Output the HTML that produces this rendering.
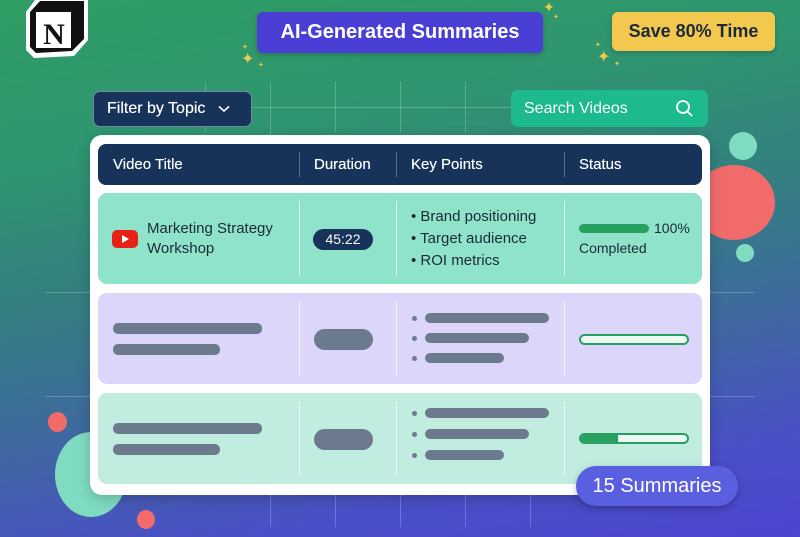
<!DOCTYPE html>
<html><head><meta charset="utf-8"><style>
*{margin:0;padding:0;box-sizing:border-box}
body{width:800px;height:537px;overflow:hidden;position:relative;font-family:"Liberation Sans","DejaVu Sans",sans-serif;
background:linear-gradient(170deg,#2f9e64 0%,#2f9570 25%,#33807f 45%,#3e6a9e 65%,#4a4fc6 85%,#4c45d0 100%)}
.a{position:absolute}
.vl{position:absolute;width:1px;background:rgba(255,255,255,.22)}
.hl{position:absolute;height:1px;background:rgba(255,255,255,.22)}
.circ{position:absolute;border-radius:50%}
.card{left:90px;top:135px;width:620px;height:360px;background:#fff;border-radius:12px;box-shadow:0 4px 14px rgba(0,0,0,.2)}
.hdr{left:98px;top:144px;width:604px;height:41px;background:#17335a;border-radius:8px;color:#fff;font-size:15px}
.hdr span{position:absolute;top:12px;text-shadow:0 0 .4px #fff}
.row{position:absolute;left:98px;width:604px;height:91px;border-radius:9px}
.sep{position:absolute;width:1px;top:8px;bottom:8px;background:rgba(255,255,255,.7)}
.bar{position:absolute;height:10px;border-radius:5px;background:#6c7a8e}
.dot{position:absolute;width:5px;height:5px;border-radius:50%;background:#6c7a8e}
.star{position:absolute;color:#f2c94c;line-height:1}
</style></head><body>
<div class="vl" style="left:205px;top:82px;height:50px"></div>
<div class="vl" style="left:270px;top:82px;height:445px"></div>
<div class="vl" style="left:335px;top:82px;height:50px"></div>
<div class="vl" style="left:400px;top:82px;height:50px"></div>
<div class="vl" style="left:465px;top:82px;height:50px"></div>
<div class="vl" style="left:335px;top:495px;height:32px"></div>
<div class="vl" style="left:400px;top:495px;height:32px"></div>
<div class="vl" style="left:465px;top:495px;height:32px"></div>
<div class="vl" style="left:530px;top:495px;height:32px"></div>
<div class="hl" style="left:252px;top:107px;width:260px"></div>
<div class="hl" style="left:45px;top:292px;width:710px"></div>
<div class="hl" style="left:45px;top:396px;width:710px"></div>

<div class="circ" style="left:693px;top:165px;width:82px;height:75px;background:#f26b6b"></div>
<div class="circ" style="left:729px;top:132px;width:28px;height:28px;background:#7fdcc0"></div>
<div class="circ" style="left:736px;top:244px;width:18px;height:18px;background:#7fdcc0"></div>
<div class="circ" style="left:48px;top:412px;width:19px;height:20px;background:#f26b6b"></div>
<div class="circ" style="left:55px;top:432px;width:72px;height:85px;background:#7fdcc0"></div>
<div class="circ" style="left:137px;top:510px;width:18px;height:19px;background:#f26b6b"></div>

<!-- notion logo -->
<svg class="a" style="left:24px;top:0px" width="66" height="58" viewBox="0 0 66 58">
<path d="M2 12 L14 -4 L64 -4 L64 40 L50 56 L10 58 L2 50 Z" fill="#fff"/>
<path d="M6 12 L16 1 L60 1 L60 39 L48 51 L12 53 L6 47 Z" fill="#111"/>
<path d="M6 12 L16 1 L54 1 L46 12 Z" fill="#fff" opacity="0"/>
<rect x="12" y="12" width="35" height="36" fill="#fff"/>
<path d="M12 12 L22 3 L57 3 L47 12 Z" fill="#111"/>
<text x="30" y="44" text-anchor="middle" font-family="Liberation Serif" font-weight="bold" font-size="30" fill="#111">N</text>
</svg>

<div class="a" style="left:257px;top:12px;width:286px;height:41px;background:#4a3fd4;border-radius:6px;color:#fff;font-size:20px;font-weight:bold;text-align:center;line-height:41px;box-shadow:0 2px 6px rgba(0,0,0,.2)">AI-Generated Summaries</div>
<div class="a" style="left:612px;top:12px;width:163px;height:39px;background:#f2c84f;border-radius:6px;color:#1c2a38;font-size:18px;font-weight:bold;text-align:center;line-height:39px;box-shadow:0 2px 6px rgba(0,0,0,.2)">Save 80% Time</div>
<div class="star" style="left:241px;top:52px;font-size:16px">✦</div>
<div class="star" style="left:242px;top:44px;font-size:7px">✦</div>
<div class="star" style="left:258px;top:62px;font-size:7px">✦</div>
<div class="star" style="left:543px;top:0px;font-size:14px">✦</div>
<div class="star" style="left:553px;top:14px;font-size:7px">✦</div>
<div class="star" style="left:597px;top:50px;font-size:16px">✦</div>
<div class="star" style="left:595px;top:42px;font-size:7px">✦</div>
<div class="star" style="left:614px;top:61px;font-size:7px">✦</div>

<div class="a" style="left:93px;top:91px;width:159px;height:36px;background:#17335a;border:1px solid #6d8aa8;border-radius:7px;color:#fff;font-size:16px;line-height:34px;padding-left:13px;text-shadow:0 0 .4px #fff">Filter by Topic <svg width="12" height="8" style="margin-left:8px;vertical-align:middle"><path d="M1 1.5 L6 6 L11 1.5" stroke="#fff" stroke-width="1.6" fill="none"/></svg></div>
<div class="a" style="left:511px;top:90px;width:197px;height:37px;background:#1dba8f;border-radius:7px;color:#fff;font-size:16px;line-height:37px;padding-left:13px">Search Videos
<svg class="a" style="left:164px;top:9px" width="20" height="20"><circle cx="8" cy="8" r="6" stroke="#fff" stroke-width="1.8" fill="none"/><path d="M12.5 12.5 L17 17" stroke="#fff" stroke-width="1.8"/></svg></div>

<div class="a card"></div>
<div class="a hdr"><span style="left:15px">Video Title</span><span style="left:216px">Duration</span><span style="left:313px">Key Points</span><span style="left:481px">Status</span>
<div class="sep" style="left:201px;background:rgba(255,255,255,.3)"></div><div class="sep" style="left:298px;background:rgba(255,255,255,.3)"></div><div class="sep" style="left:466px;background:rgba(255,255,255,.3)"></div></div>

<div class="row" style="top:193px;background:#8fe3cb">
<div class="sep" style="left:201px"></div><div class="sep" style="left:298px"></div><div class="sep" style="left:466px"></div>
<div class="a" style="left:14px;top:37px;width:26px;height:18px;background:#e62117;border-radius:5px"><div class="a" style="left:10px;top:5px;border-left:7px solid #fff;border-top:4px solid transparent;border-bottom:4px solid transparent"></div></div>
<div class="a" style="left:49px;top:26px;font-size:15px;color:#1c2a38;line-height:20px">Marketing Strategy<br>Workshop</div>
<div class="a" style="left:215px;top:36px;width:60px;height:21px;background:#17335a;border-radius:11px;color:#fff;font-size:14px;text-align:center;line-height:21px">45:22</div>
<div class="a" style="left:313px;top:13px;font-size:15px;color:#1c2a38;line-height:22px">• Brand positioning<br>• Target audience<br>• ROI metrics</div>
<div class="a" style="left:481px;top:31px;width:70px;height:9px;background:#27a060;border-radius:5px"></div>
<div class="a" style="left:556px;top:27px;font-size:14px;color:#1c2a38">100%</div>
<div class="a" style="left:481px;top:47px;font-size:14px;color:#1c2a38">Completed</div>
</div>

<div class="row" style="top:293px;background:#dbd6fa">
<div class="sep" style="left:201px"></div><div class="sep" style="left:298px"></div><div class="sep" style="left:466px"></div>
<div class="bar" style="left:15px;top:30px;width:149px;height:11px"></div>
<div class="bar" style="left:15px;top:51px;width:107px;height:11px"></div>
<div class="bar" style="left:216px;top:36px;width:59px;height:21px;border-radius:11px"></div>
<div class="dot" style="left:314px;top:23px"></div><div class="bar" style="left:327px;top:20px;width:124px"></div>
<div class="dot" style="left:314px;top:43px"></div><div class="bar" style="left:327px;top:40px;width:104px"></div>
<div class="dot" style="left:314px;top:63px"></div><div class="bar" style="left:327px;top:60px;width:79px"></div>
<div class="a" style="left:481px;top:41px;width:110px;height:11px;border:2px solid #27a060;border-radius:6px;background:#eef8f2"></div>
</div>

<div class="row" style="top:393px;background:#c0ede0">
<div class="sep" style="left:201px"></div><div class="sep" style="left:298px"></div><div class="sep" style="left:466px"></div>
<div class="bar" style="left:15px;top:30px;width:149px;height:11px"></div>
<div class="bar" style="left:15px;top:51px;width:107px;height:11px"></div>
<div class="bar" style="left:216px;top:36px;width:59px;height:21px;border-radius:11px"></div>
<div class="dot" style="left:314px;top:18px"></div><div class="bar" style="left:327px;top:15px;width:124px"></div>
<div class="dot" style="left:314px;top:39px"></div><div class="bar" style="left:327px;top:36px;width:104px"></div>
<div class="dot" style="left:314px;top:60px"></div><div class="bar" style="left:327px;top:57px;width:79px"></div>
<div class="a" style="left:481px;top:40px;width:110px;height:11px;border:2px solid #27a060;border-radius:6px;background:#eef8f2;overflow:hidden"><div style="width:37px;height:100%;background:#27a060"></div></div>
</div>

<div class="a" style="left:576px;top:466px;width:162px;height:40px;background:#5a5fe0;border-radius:20px;color:#fff;font-size:20px;text-align:center;line-height:40px;box-shadow:0 3px 8px rgba(0,0,0,.25)">15 Summaries</div>
</body></html>
